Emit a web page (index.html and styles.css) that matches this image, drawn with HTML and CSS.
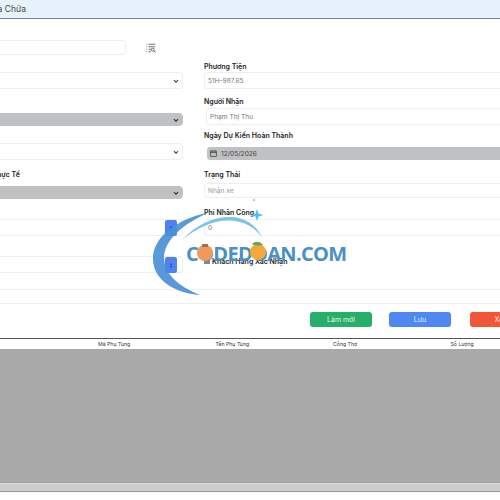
FILE: index.html
```html
<!DOCTYPE html>
<html lang="vi">
<head>
<meta charset="utf-8">
<title>Phiếu Sửa Chữa</title>
<link rel="stylesheet" href="styles.css">
</head>
<body>
<div class="page">
  <header class="topbar"><span class="title">Phiếu Sửa Chữa</span></header>
  <main class="form">
    <div class="cols">
      <section class="col left">
        <div class="search-row">
          <div class="box search"></div>
          <svg class="list-icon" viewBox="0 0 12 12" width="10" height="10"><path d="M0.5 1.5h1M3 1.5h8M0.5 4.5h1M3 4.5h8M0.5 7.5h1M3 7.5h3M0.5 10.5h1M3 10.5h3" stroke="#555" stroke-width="1" fill="none"/><circle cx="8.2" cy="8" r="1.8" stroke="#555" fill="none"/><path d="M9.5 9.5l2 1.6" stroke="#555"/></svg>
        </div>
        <div class="box select m1"><svg class="chev" viewBox="0 0 8 8"><path d="M1.2 2.8L4 5.5l2.8-2.7" fill="none" stroke="#444" stroke-width="1.5"/></svg></div>
        <div class="box select gray m2"><svg class="chev" viewBox="0 0 8 8"><path d="M1.2 2.8L4 5.5l2.8-2.7" fill="none" stroke="#333" stroke-width="1.5"/></svg></div>
        <div class="box select m3"><svg class="chev" viewBox="0 0 8 8"><path d="M1.2 2.8L4 5.5l2.8-2.7" fill="none" stroke="#444" stroke-width="1.5"/></svg></div>
        <label class="lbl m4">Ngày Hoàn Thành Thực Tế</label>
        <div class="box select gray m5"><svg class="chev" viewBox="0 0 8 8"><path d="M1.2 2.8L4 5.5l2.8-2.7" fill="none" stroke="#333" stroke-width="1.5"/></svg></div>
        <div class="box num m6"><span class="spin"><i class="up"></i><i class="down"></i></span></div>
        <div class="box num m7"><span class="spin"><i class="up"></i><i class="down"></i></span></div>
      </section>
      <section class="col right">
        <label class="lbl">Phương Tiện</label>
        <div class="box tall txt r1">51H-987.65</div>
        <label class="lbl r2">Người Nhận</label>
        <div class="box tall txt r3">Phạm Thị Thu</div>
        <label class="lbl r4">Ngày Dự Kiến Hoàn Thành</label>
        <div class="box gray date r5">
          <svg class="cal" viewBox="0 0 10 10" width="7" height="7"><rect x="1" y="1.5" width="8" height="7.5" fill="none" stroke="#333" stroke-width="1"/><path d="M1 3.6h8M3 .5v2M7 .5v2" stroke="#333" stroke-width="1"/></svg>
          <span>12/05/2026</span>
        </div>
        <label class="lbl r6">Trạng Thái</label>
        <div class="box txt light r7">Nhận xe</div>
        <label class="lbl r8">Phí Nhân Công</label>
        <div class="box tall txt r9">0</div>
        <div class="check r10"><span class="checkbox"></span><span class="lbl">Khách Hàng Xác Nhận</span></div>
      </section>
    </div>
    <div class="box full"></div>
    <div class="actions">
      <button class="btn green">Làm mới</button>
      <button class="btn blue">Lưu</button>
      <button class="btn red">Xóa</button>
    </div>
  </main>
  <section class="table">
    <div class="thead">
      <span>Mã Phụ Tùng</span><span>Tên Phụ Tùng</span><span>Công Thợ</span><span>Số Lượng</span>
    </div>
    <div class="tbody"></div>
    <div class="hscroll"></div>
  </section>
  <div class="watermark">
    <svg viewBox="0 0 210 110" width="210" height="110">
      <path d="M60 18C22 26 2 46 3 66C4 86 24 99 50 101C28 92 14 80 14 63C15 46 32 30 60 18Z" fill="#4a90d6" fill-opacity=".92"/>
      <path d="M32 46C46 31 62 23 80 23C95 23 106 31 112 43C104 33 94 27 80 26.500C63 26 47 34 32 46Z" fill="#7cc4e8"/>
      <path d="M107 15l1.500 4.500 5 1.500-5 1.500-1.500 4.500-1.500-4.500-5-1.500 5-1.500z" fill="#4fc0ee"/>
      <circle cx="104" cy="6" r=".8" fill="#4a7fc0"/>
      <text class="wm-text" x="36" y="67" textLength="161" lengthAdjust="spacing">CODEDOAN.COM</text>
      <circle cx="55" cy="59" r="8" fill="#ef9a5a"/>
      <path d="M52 50h6v3h-6z" fill="#a0704a"/>
      <circle cx="108" cy="58" r="8" fill="#f6a93b"/>
      <path d="M102 50c3-3 8-3 11 1-4 1-8 1-11-1z" fill="#6aa84f"/>
    </svg>
  </div>
</div>
</body>
</html>
```

FILE: styles.css
```css
* { box-sizing: border-box; }
html, body { margin: 0; padding: 0; background: #fff; }
body { font-family: Inter, "Liberation Sans", sans-serif; color: #222; }
.page { position: relative; width: 500px; height: 500px; overflow: hidden; }

.topbar { height: 19px; background: #e8f2fc; border-bottom: 1px solid #7d8388; display: flex; align-items: center; margin-left: -38px; }
.title { font-size: 8.5px; color: #444; white-space: nowrap; }

.form { width: 660px; margin-left: -120px; padding-top: 21px; }
.cols { display: flex; gap: 21px; height: 233px; }
.col { display: flex; flex-direction: column; align-items: stretch; }
.left { width: 303px; }
.right { width: 320px; padding-top: 21px; }

.box { border: 1px solid #edeef0; border-radius: 3px; background: #fff; position: relative; height: 15px; flex: none; }
.tall { height: 17px; }
.select { height: 17px; }
.gray { background: #bfc1c3; border-color: #bfc1c3; height: 13px; }
.select.gray { height: 13px; border-radius: 4px; }
.chev { position: absolute; right: 3px; top: 50%; width: 6px; height: 6px; margin-top: -3px; }

.search-row { display: flex; align-items: center; gap: 20px; height: 15px; }
.search { width: 246px; }
.list-icon { flex: none; }

.lbl { display: block; font-size: 7px; font-weight: 600; line-height: 12px; height: 10px; color: #222; white-space: nowrap; }
.left .lbl { padding-left: 50px; }

.m1 { margin-top: 17px; }
.m2 { margin-top: 24px; }
.m3 { margin-top: 17px; }
.m4 { margin-top: 9px; }
.m5 { margin-top: 7px; }
.m6 { margin-top: 20px; height: 17px; }
.m7 { margin-top: 20px; height: 17px; }

.spin { position: absolute; right: 5px; top: 0; width: 12px; height: 16px; background: #4d82f0; border-radius: 2px; display: flex; flex-direction: column; align-items: center; justify-content: center; gap: 1px; }
.spin i { width: 0; height: 0; border-left: 1.5px solid transparent; border-right: 1.5px solid transparent; }
.spin .up { border-bottom: 2px solid #1d3f80; }
.spin .down { border-top: 2px solid #1d3f80; }

.txt { font-size: 6.6px; color: #777; display: flex; align-items: center; padding-left: 3px; }
.light { color: #999; }
.r1 { margin-top: 1px; }
.r2 { margin-top: 7px; }
.r3 { margin-top: 2px; margin-left: 2px; }
.r4 { margin-top: 5px; }
.r5 { margin-top: 7px; margin-left: 3px; display: flex; align-items: center; gap: 4px; padding-left: 2px; font-size: 6.6px; color: #444; border-radius: 3px; }
.r6 { margin-top: 9px; }
.r7 { margin-top: 4px; }
.r8 { margin-top: 9px; }
.r9 { margin-top: 2px; }
.r10 { margin-top: 20px; }
.check { display: flex; align-items: center; gap: 2px; height: 10px; }
.checkbox { width: 6px; height: 6px; background: #888; flex: none; }

.full { width: 660px; height: 15px; margin-top: 16px; }
.actions { display: flex; gap: 17px; margin-top: 8px; margin-left: 430px; }
.btn { width: 62px; height: 15px; border: 0; border-radius: 3px; color: #e8f3ee; font: 400 7px Inter, "Liberation Sans", sans-serif; padding: 0; }
.green { background: #27ae68; }
.blue { background: #5088f2; }
.red { background: #f25637; margin-left: 2px; }

.table { margin-top: 11px; }
.thead { height: 11px; border-top: 1px solid #555; display: flex; padding-left: 98px; background: #fff; font-size: 5.2px; color: #333; align-items: center; }
.thead span { width: 117.5px; flex: none; white-space: nowrap; }
.tbody { height: 134px; background: #a9a9a9; border-bottom: 1px solid #a0a0a0; }
.hscroll { height: 9px; background: #cdcdcd; border-top: 1px solid #ddd; border-bottom: 1px solid #999; }

.watermark { position: absolute; left: 150px; top: 194px; width: 210px; height: 110px; pointer-events: none; }
.wm-text { font-family: "Open Sans", "Liberation Sans", sans-serif; font-weight: 700; font-size: 20px; fill: #4a90c8; }
```
